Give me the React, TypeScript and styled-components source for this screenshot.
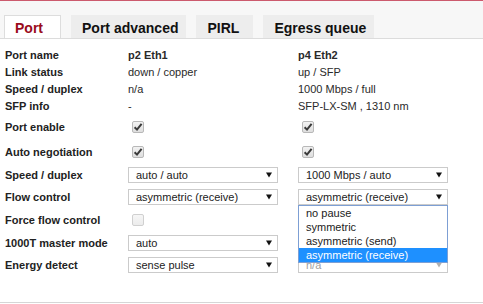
import React from "react";
import styled, { createGlobalStyle } from "styled-components";

const GlobalStyle = createGlobalStyle`
  html, body { margin: 0; padding: 0; background: #ffffff; }
  body { font-family: "Liberation Sans", Arial, sans-serif; }
  * { box-sizing: border-box; }
`;

const Page = styled.div`
  width: 483px;
  height: 304px;
  display: flex;
  flex-direction: column;
  background: #ffffff;
  overflow: hidden;
`;

const TabBar = styled.div`
  height: 39px;
  flex: none;
  display: flex;
  align-items: flex-end;
  gap: 10px;
  padding-left: 4px;
  background: #f7f7f7;
  border-top: 1px solid #cc5a6d;
  border-bottom: 1px solid #dcdcdc;
`;

const Tab = styled.div<{ $active?: boolean }>`
  height: 23px;
  min-width: 57px;
  padding: 0 7px 0 10px;
  display: flex;
  align-items: center;
  font-size: 14px;
  font-weight: bold;
  color: ${(p) => (p.$active ? "#9a0b1c" : "#111111")};
  background: ${(p) => (p.$active ? "#ffffff" : "#ededed")};
  border: 1px solid ${(p) => (p.$active ? "#dddddd" : "transparent")};
  border-bottom: none;
  padding-top: 1px;
`;

const Content = styled.div`
  flex: 1;
  padding: 7px 0 0 5px;
`;

const Row = styled.div<{ $h: number }>`
  height: ${(p) => p.$h}px;
  display: grid;
  grid-template-columns: 123px 170px 1fr;
  align-items: center;
  font-size: 11px;
`;

const Label = styled.div`
  font-weight: bold;
  color: #222222;
  white-space: nowrap;
`;

const Value = styled.div<{ $bold?: boolean }>`
  color: #2a2a2a;
  font-weight: ${(p) => (p.$bold ? "bold" : "normal")};
  white-space: nowrap;
`;

const Cell = styled.div`
  position: relative;
  display: flex;
  align-items: center;
`;

const Box = styled.span<{ $disabled?: boolean }>`
  width: 12px;
  height: 12px;
  margin-left: 4px;
  border: 1px solid ${(p) => (p.$disabled ? "#d0d0d0" : "#b8b8b8")};
  border-radius: 2px;
  background: ${(p) =>
    p.$disabled
      ? "linear-gradient(#f6f6f6, #ececec)"
      : "linear-gradient(#f2f2f2, #dedede)"};
  display: flex;
  align-items: center;
  justify-content: center;
`;

const Select = styled.div<{ $disabled?: boolean }>`
  width: 150px;
  height: 16px;
  border: 1px solid #cbcbcb;
  background: #ffffff;
  display: flex;
  align-items: center;
  justify-content: space-between;
  padding: 0 5px 0 7px;
  color: ${(p) => (p.$disabled ? "#a0a0a0" : "#222222")};
  white-space: nowrap;
`;

const List = styled.div`
  position: absolute;
  left: 0;
  top: 100%;
  width: 150px;
  border: 1px solid #7d9fd4;
  background: #ffffff;
  z-index: 2;
`;

const Option = styled.div<{ $active?: boolean }>`
  height: 14px;
  line-height: 14px;
  padding-left: 7px;
  font-size: 11px;
  color: ${(p) => (p.$active ? "#ffffff" : "#222222")};
  background: ${(p) => (p.$active ? "#1e90ff" : "transparent")};
  white-space: nowrap;
`;

const Rule = styled.div`
  height: 1px;
  flex: none;
  background: #d6d6d6;
  margin-bottom: 1px;
`;

const Arrow = ({ disabled }: { disabled?: boolean }) => (
  <svg width="6" height="6" viewBox="0 0 6 6">
    <polygon points="0,0.5 6,0.5 3,5.5" fill={disabled ? "#b0b0b0" : "#111111"} />
  </svg>
);

const Check = ({ checked, disabled }: { checked?: boolean; disabled?: boolean }) => (
  <Box $disabled={disabled}>
    {checked && (
      <svg width="10" height="10" viewBox="0 0 10 10">
        <path d="M1.6 5.2 L4 7.6 L8.6 1.8" stroke="#3a3a3a" strokeWidth="2" fill="none" />
      </svg>
    )}
  </Box>
);

const Drop = ({ value, disabled, children }: { value: string; disabled?: boolean; children?: React.ReactNode }) => (
  <Cell>
    <Select $disabled={disabled}>
      <span>{value}</span>
      <Arrow disabled={disabled} />
    </Select>
    {children}
  </Cell>
);

export default function App() {
  return (
    <>
      <GlobalStyle />
      <Page>
        <TabBar>
          <Tab $active>Port</Tab>
          <Tab>Port advanced</Tab>
          <Tab>PIRL</Tab>
          <Tab>Egress queue</Tab>
        </TabBar>
        <Content>
          <Row $h={17}>
            <Label>Port name</Label>
            <Value $bold>p2 Eth1</Value>
            <Value $bold>p4 Eth2</Value>
          </Row>
          <Row $h={17}>
            <Label>Link status</Label>
            <Value>down / copper</Value>
            <Value>up / SFP</Value>
          </Row>
          <Row $h={17}>
            <Label>Speed / duplex</Label>
            <Value>n/a</Value>
            <Value>1000 Mbps / full</Value>
          </Row>
          <Row $h={17}>
            <Label>SFP info</Label>
            <Value>-</Value>
            <Value>SFP-LX-SM , 1310 nm</Value>
          </Row>
          <Row $h={25}>
            <Label>Port enable</Label>
            <Cell><Check checked /></Cell>
            <Cell><Check checked /></Cell>
          </Row>
          <Row $h={25}>
            <Label>Auto negotiation</Label>
            <Cell><Check checked /></Cell>
            <Cell><Check checked /></Cell>
          </Row>
          <Row $h={22}>
            <Label>Speed / duplex</Label>
            <Drop value="auto / auto" />
            <Drop value="1000 Mbps / auto" />
          </Row>
          <Row $h={22}>
            <Label>Flow control</Label>
            <Drop value="asymmetric (receive)" />
            <Drop value="asymmetric (receive)">
              <List>
                <Option>no pause</Option>
                <Option>symmetric</Option>
                <Option>asymmetric (send)</Option>
                <Option $active>asymmetric (receive)</Option>
              </List>
            </Drop>
          </Row>
          <Row $h={24}>
            <Label>Force flow control</Label>
            <Cell><Check disabled /></Cell>
            <Cell />
          </Row>
          <Row $h={22}>
            <Label>1000T master mode</Label>
            <Drop value="auto" />
            <Cell />
          </Row>
          <Row $h={22}>
            <Label>Energy detect</Label>
            <Drop value="sense pulse" />
            <Drop value="n/a" disabled />
          </Row>
        </Content>
        <Rule />
      </Page>
    </>
  );
}
